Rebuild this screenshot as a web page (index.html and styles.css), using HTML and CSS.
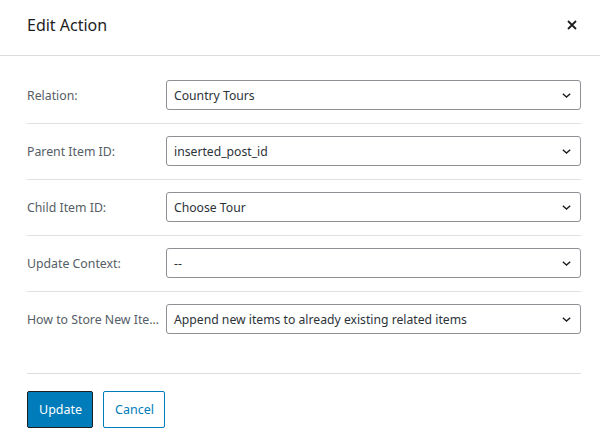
FILE: index.html
```html
<!DOCTYPE html>
<html>
<head>
<meta charset="utf-8">
<link rel="stylesheet" href="styles.css">
</head>
<body>
<div class="modal">
  <div class="modal-header">
    <h1 class="modal-title">Edit Action</h1>
    <button class="close-btn" aria-label="Close">
      <svg width="10" height="10" viewBox="0 0 10 10"><path d="M1 1 L9 9 M9 1 L1 9" stroke="#1e1e1e" stroke-width="1.8" fill="none"/></svg>
    </button>
  </div>
  <div class="modal-body">
    <div class="row">
      <div class="label">Relation:</div>
      <div class="select"><span class="value">Country Tours</span><svg class="chev" width="9" height="5" viewBox="0 0 9 5"><path d="M0.8 0.8 L4.5 4 L8.2 0.8" stroke="#1e1e1e" stroke-width="1.4" fill="none"/></svg></div>
    </div>
    <div class="row">
      <div class="label">Parent Item ID:</div>
      <div class="select"><span class="value">inserted_post_id</span><svg class="chev" width="9" height="5" viewBox="0 0 9 5"><path d="M0.8 0.8 L4.5 4 L8.2 0.8" stroke="#1e1e1e" stroke-width="1.4" fill="none"/></svg></div>
    </div>
    <div class="row">
      <div class="label">Child Item ID:</div>
      <div class="select"><span class="value">Choose Tour</span><svg class="chev" width="9" height="5" viewBox="0 0 9 5"><path d="M0.8 0.8 L4.5 4 L8.2 0.8" stroke="#1e1e1e" stroke-width="1.4" fill="none"/></svg></div>
    </div>
    <div class="row">
      <div class="label">Update Context:</div>
      <div class="select"><span class="value">--</span><svg class="chev" width="9" height="5" viewBox="0 0 9 5"><path d="M0.8 0.8 L4.5 4 L8.2 0.8" stroke="#1e1e1e" stroke-width="1.4" fill="none"/></svg></div>
    </div>
    <div class="row last">
      <div class="label">How to Store New Items:</div>
      <div class="select"><span class="value">Append new items to already existing related items</span><svg class="chev" width="9" height="5" viewBox="0 0 9 5"><path d="M0.8 0.8 L4.5 4 L8.2 0.8" stroke="#1e1e1e" stroke-width="1.4" fill="none"/></svg></div>
    </div>
    <div class="footer">
      <button class="btn btn-primary">Update</button>
      <button class="btn btn-secondary">Cancel</button>
    </div>
  </div>
</div>
</body>
</html>
```
FILE: styles.css
```css
html, body {
  margin: 0;
  padding: 0;
  background: #fff;
}
body {
  font-family: "Noto Sans", "Open Sans", sans-serif;
  color: #1e1e1e;
}
.modal {
  width: 600px;
  height: 444px;
  background: #fff;
}
.modal-header {
  height: 55px;
  border-bottom: 1px solid #dcdcde;
  display: flex;
  align-items: center;
  justify-content: space-between;
  padding: 0 23px 0 27px;
  box-sizing: content-box;
}
.modal-title {
  margin: 0;
  font-size: 16px;
  font-weight: 400;
  color: #1e1e1e;
  line-height: 20px;
  margin-top: -6px;
}
.close-btn {
  background: none;
  border: 0;
  padding: 0;
  width: 10px;
  height: 10px;
  display: flex;
  margin-top: -6px;
}
.modal-body {
  padding: 12px 19px 0 27px;
}
.row {
  display: flex;
  align-items: center;
  gap: 4px;
  padding: 12px 0 13px;
  border-bottom: 1px solid #e0e0e0;
}
.row.last {
  border-bottom: 0;
}
.label {
  width: 135px;
  flex: none;
  font-size: 12.3px;
  color: #555d66;
  white-space: nowrap;
  overflow: hidden;
  text-overflow: ellipsis;
}
.select {
  flex: 1;
  height: 30px;
  box-sizing: border-box;
  border: 1px solid #8c8f94;
  border-radius: 3px;
  display: flex;
  align-items: center;
  justify-content: space-between;
  padding: 0 9px 0 7px;
  font-size: 12.2px;
  color: #2c3338;
}
.chev {
  flex: none;
}
.footer {
  margin-top: 26px;
  border-top: 1px solid #dcdcde;
  padding-top: 17px;
  display: flex;
  gap: 10px;
}
.btn {
  height: 37px;
  box-sizing: border-box;
  font-family: inherit;
  font-size: 12.5px;
  border-radius: 2px;
  padding: 0 11px;
  margin: 0;
}
.btn-primary {
  background: #007cba;
  color: #fff;
  border: 1px solid #1e1e1e;
  width: 66px;
}
.btn-secondary {
  background: #fff;
  color: #007cba;
  border: 1px solid #007cba;
  width: 62px;
}
```
